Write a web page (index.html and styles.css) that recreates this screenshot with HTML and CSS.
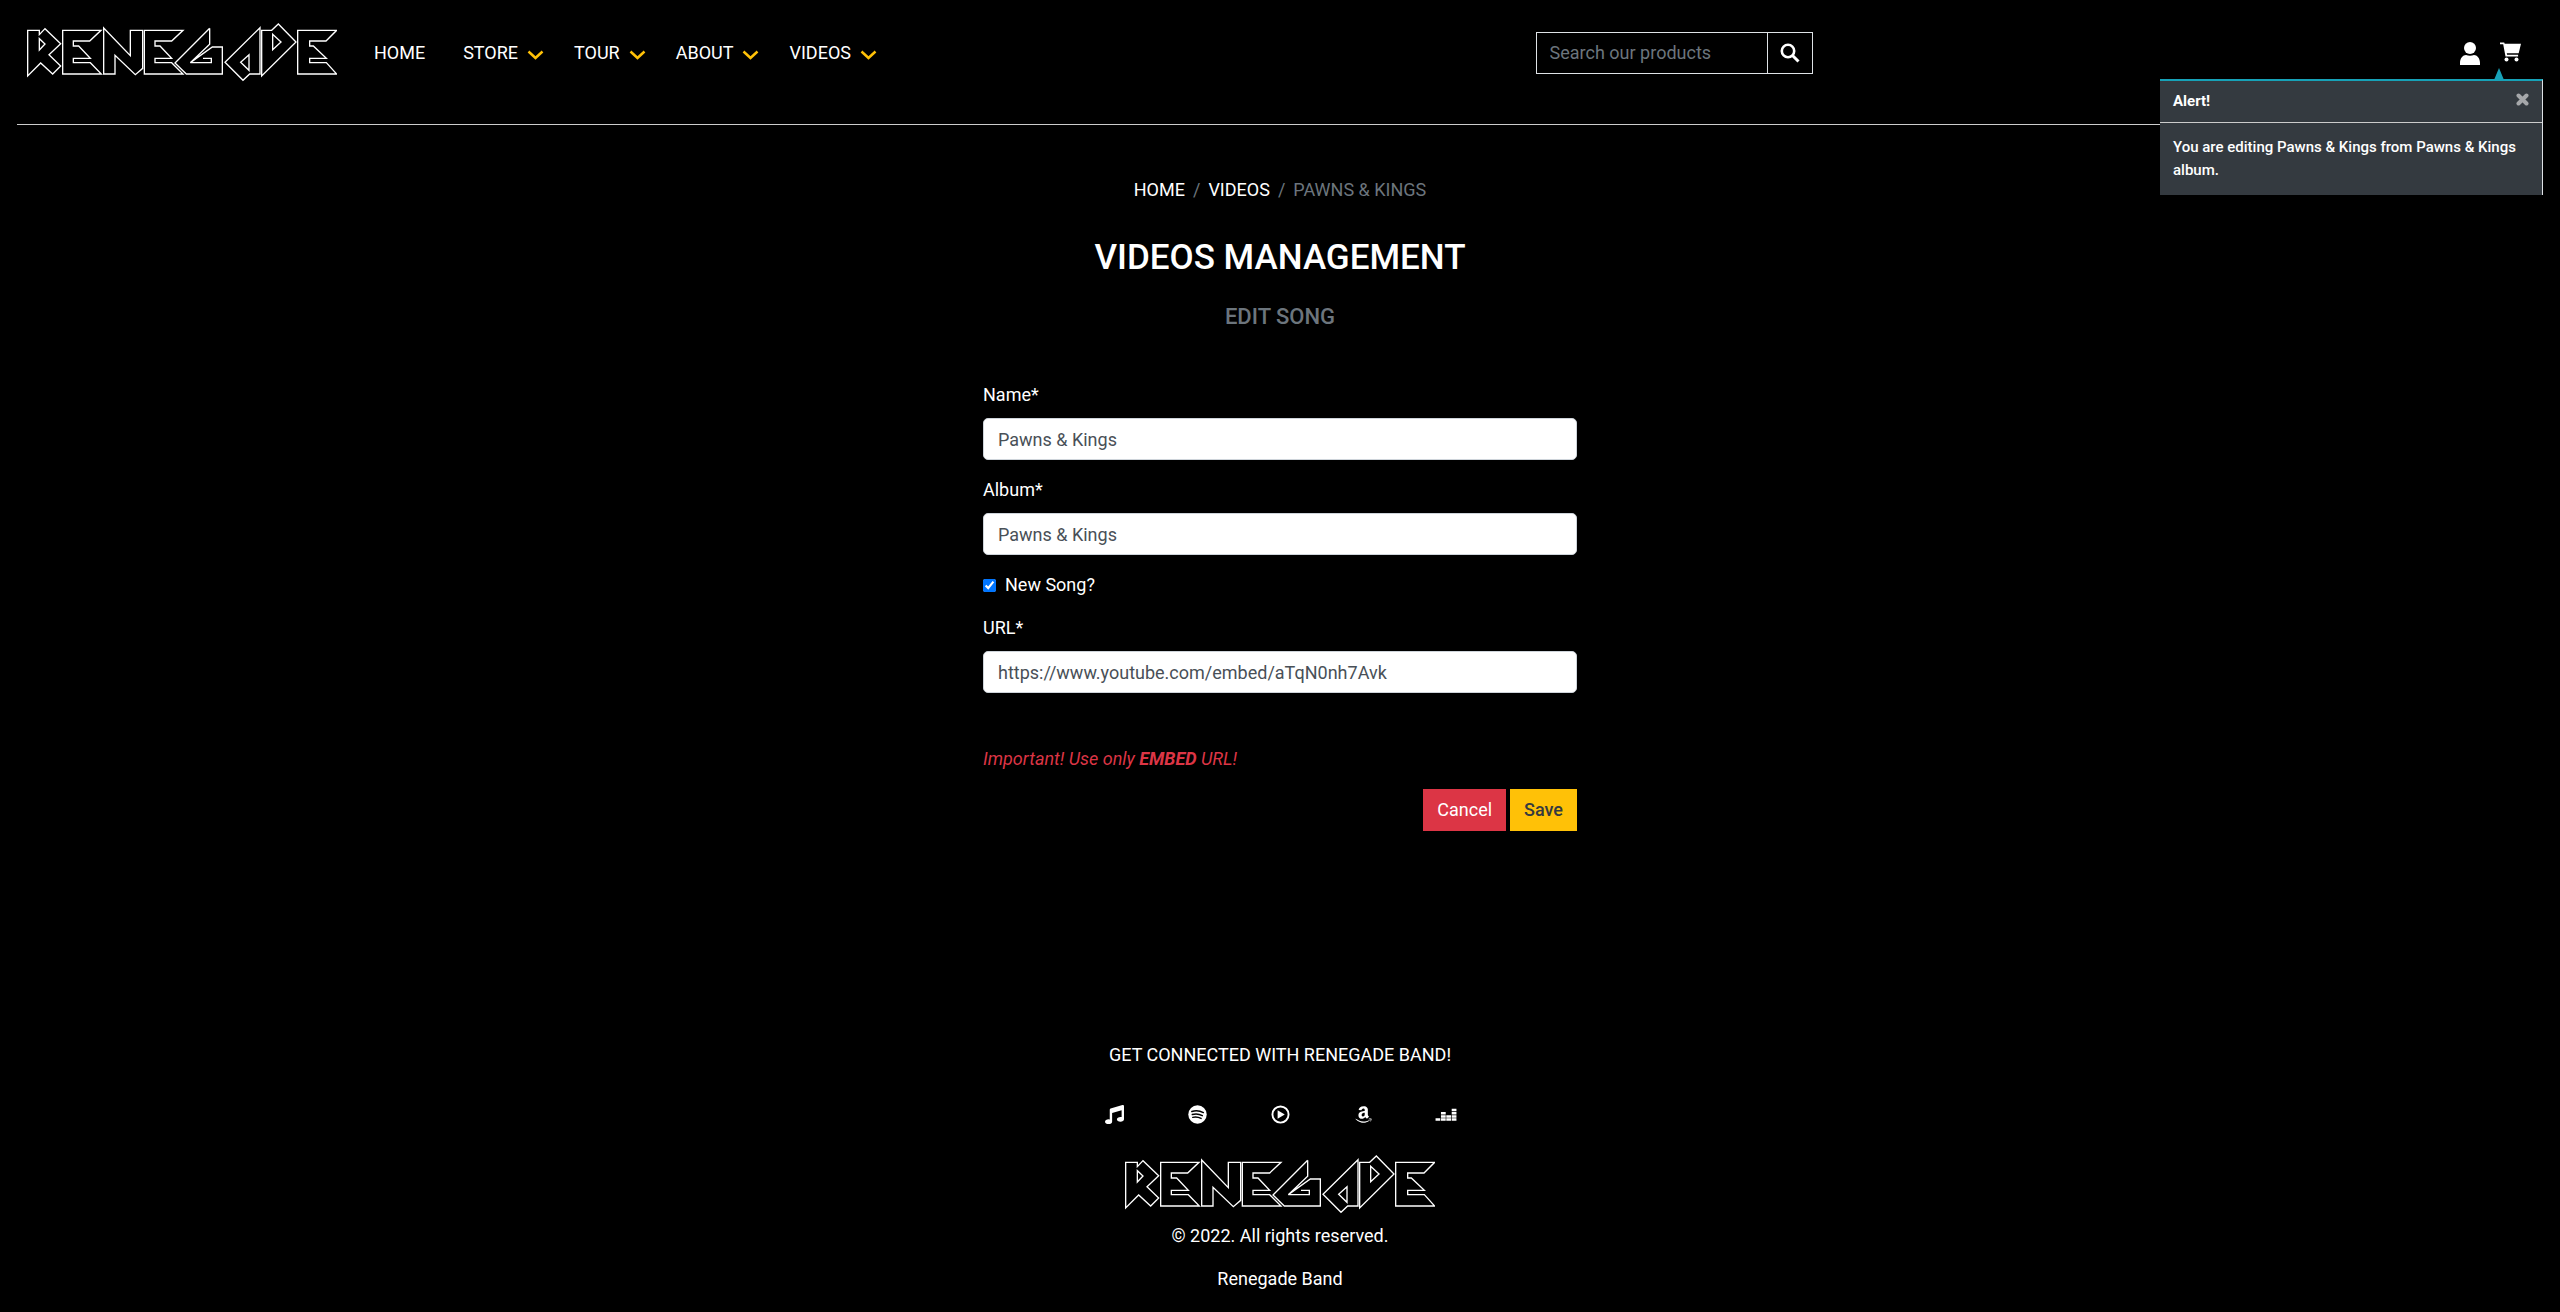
FILE: index.html
```html
<!DOCTYPE html>
<html lang="en">
<head>
<meta charset="utf-8">
<title>Renegade Band</title>
<link rel="stylesheet" href="styles.css">
</head>
<body>
<svg width="0" height="0" class="sprite" aria-hidden="true">
  <symbol id="chevron" viewBox="0 0 16 10"><path d="M1 1.500l7 6.500 7-6.500" fill="none" stroke="currentColor" stroke-width="2.500"/></symbol>
  <symbol id="logo" viewBox="0 0 930 175">
    <g fill="none" stroke="#fff" stroke-width="4" stroke-miterlimit="3">
      <path d="M2 21H37V34L54 16L101 61L66 94L101 128L77 152L41 119L2 158ZM37 46V80L54 62Z"/>
      <path d="M107 21H222L188 53H139V68H155L190 105H139V118H190L223 152H107Z"/>
      <path d="M230 14L310 97V21H347V135L325 154L264 96V152H230Z"/>
      <path d="M352 21H468L434 53H384V68H399L434 105H384V118H434L468 152H352Z"/>
      <path d="M548 15L444 119L478 152H586V71H556L490 118H553V105H528M548 15V63L490 118"/>
      <path d="M699 13L594 117L648 171L668 152H699ZM666 94V141L641 117Z"/>
      <path d="M704 21H734L754 2L807 56L704 158ZM737 33V79L762 56Z"/>
      <path d="M812 21H929L897 53H848V68H859L898 105H848V118H898L929 152H812Z"/>
    </g>
  </symbol>
</svg>
<header class="header">
  <a class="logo-link" href="#" aria-label="Renegade home"><svg class="logo"><use href="#logo"/></svg></a>
  <nav class="nav" aria-label="Main">
    <a href="#">HOME</a>
    <a href="#">STORE <svg class="chevron"><use href="#chevron"/></svg></a>
    <a href="#">TOUR <svg class="chevron"><use href="#chevron"/></svg></a>
    <a href="#">ABOUT <svg class="chevron"><use href="#chevron"/></svg></a>
    <a href="#">VIDEOS <svg class="chevron"><use href="#chevron"/></svg></a>
  </nav>
  <form class="search">
    <input type="search" placeholder="Search our products" aria-label="Search our products">
    <button type="button" aria-label="Search"><svg width="20" height="20" viewBox="0 0 20 20"><circle cx="8" cy="8" r="6.200" fill="none" stroke="#fff" stroke-width="2.600"/><path d="M12.500 12.500l6 6" stroke="#fff" stroke-width="3"/></svg></button>
  </form>
  <div class="account">
    <a href="#" aria-label="Account"><svg width="20" height="23" viewBox="0 0 20 23" fill="#fff"><circle cx="10" cy="6" r="6"/><path d="M0 23v-2c0-5 3-8 6-8 2.500 1 5.500 1 8 0 3 0 6 3 6 8v2z"/></svg></a>
    <a href="#" aria-label="Cart"><svg width="21" height="20" viewBox="0 0 21 20" fill="#fff"><path d="M0 .5h4.200l.5 1.300H21l-2.300 9.400H6.800l.3 1.600h11v1.700H5.500L3.200 2.300H0z"/><circle cx="6.500" cy="17.500" r="2"/><circle cx="16.500" cy="17.500" r="2"/></svg></a>
  </div>
  <div class="toast" role="alert">
    <div class="toast-head"><strong>Alert!</strong>
      <button type="button" aria-label="Close"><svg width="13" height="13" viewBox="0 0 13 13"><path d="M2.500 2.500l8 8m0-8l-8 8" stroke="#a5a7aa" stroke-width="4" stroke-linecap="round"/></svg></button></div>
    <p>You are editing Pawns &amp; Kings from Pawns &amp; Kings album.</p>
  </div>
</header>
<main class="main">
  <nav class="crumbs" aria-label="Breadcrumb"><a href="#">HOME</a><span>/</span><a href="#">VIDEOS</a><span>/</span><span>PAWNS &amp; KINGS</span></nav>
  <h1>VIDEOS MANAGEMENT</h1>
  <h2>EDIT SONG</h2>
  <form class="form">
    <div class="field"><label for="name">Name*</label><input id="name" type="text" value="Pawns &amp; Kings"></div>
    <div class="field"><label for="album">Album*</label><input id="album" type="text" value="Pawns &amp; Kings"></div>
    <div class="check"><input id="new" type="checkbox" checked><label for="new">New Song?</label></div>
    <div class="field"><label for="url">URL*</label><input id="url" type="text" value="https://www.youtube.com/embed/aTqN0nh7Avk"></div>
    <p class="note">Important! Use only <strong>EMBED</strong> URL!</p>
    <div class="actions"><button type="button" class="cancel">Cancel</button><button type="button" class="save">Save</button></div>
  </form>
</main>
<footer class="footer">
  <p>GET CONNECTED WITH RENEGADE BAND!</p>
  <div class="social">
    <a href="#" aria-label="Music"><svg viewBox="0 0 512 512"><path d="M511.990 32c0-21-20-37-41.600-30.500l-320 96A32 32 0 0 0 128 128v261a137 137 0 0 0-32-5c-53 0-96 28.700-96 64s43 64 96 64 96-28.700 96-64V215l256-75v185a138 138 0 0 0-32-5c-53 0-96 28.700-96 64s43 64 96 64 96-28.700 96-64z"/></svg></a>
    <a href="#" aria-label="Spotify"><svg viewBox="0 0 20 20"><circle cx="10" cy="10" r="9.700"/><path d="M4 6.800c4-1.200 8.500-.8 12.200 1.200M4.500 10c3.500-1 7.500-.5 10.600 1.200M5 13c3-.7 6-.3 8.800 1.200" fill="none" stroke="#000" stroke-width="1.500" stroke-linecap="round"/></svg></a>
    <a href="#" aria-label="YouTube Music"><svg viewBox="0 0 20 20"><circle cx="10" cy="10" r="8.500" fill="none" stroke="#fff" stroke-width="2"/><path d="M7 5.500l7.500 4.500L7 14.500z"/></svg></a>
    <a href="#" aria-label="Amazon"><svg viewBox="0 0 448 512"><path d="M257.200 162.700c-48.700 1.800-169.500 15.500-169.500 117.500 0 109.500 138.300 114 183.500 43.200 6.500 10.200 35.400 37.500 45.300 46.800l56.800-56S341 288.900 341 261.400V114.300C341 89 316.500 32 228.700 32 140.700 32 94 87 94 136.300l73.500 6.800c16.300-49.500 54.200-49.500 54.200-49.500 40.700-.1 35.500 29.800 35.500 69.100zm0 86.800c0 80-84.200 68-84.200 17.200 0-47.200 50.500-56.700 84.200-57.800v40.600zm136 163.500c-7.700 10-70 67-174.500 67S34.200 408.500 9.700 379c-6.800-7.700 1-11.300 5.500-8.300C88.500 415.200 203 488.500 387.700 401c7.500-3.700 13.300 2 5.500 12zm39.800 2.200c-6.500 15.800-16 26.800-21.200 31-5.500 4.500-9.500 2.700-6.500-3.800s19.300-46.500 12.700-55c-6.500-8.300-37-4.300-48-3.200-10.800 1-13 2-14-.3-2.300-5.700 21.700-15.500 37.500-17.500 15.700-1.800 41-.8 46 5.700 3.700 5.100 0 27.100-6.500 43.100z"/></svg></a>
    <a href="#" aria-label="Deezer"><svg class="wide" viewBox="0 0 22 20"><path d="M0 14h5v2.500H0zM5.700 14h5v2.500h-5zM11.300 14h5v2.500h-5zM17 14h5v2.500h-5zM5.700 10.700h5v2.600h-5zM11.300 10.700h5v2.600h-5zM17 10.700h5v2.600h-5zM5.700 7.400h5V10h-5zM17 7.400h5V10h-5zM17 4h5v2.700h-5z"/></svg></a>
  </div>
  <svg class="logo" role="img" aria-label="Renegade"><use href="#logo"/></svg>
  <p>© 2022. All rights reserved.</p>
  <a href="#">Renegade Band</a>
</footer>
</body>
</html>
```
FILE: styles.css
```css
* { box-sizing: border-box; }
body {
  margin: 0;
  min-height: 100vh;
  display: flex;
  flex-direction: column;
  background: #000;
  color: #fff;
  font: 400 18px/26px Roboto, sans-serif;
}
a { color: inherit; text-decoration: none; }
p, h1, h2 { margin: 0; }
button, input { font: inherit; }
svg { display: block; }
.sprite { position: absolute; }
.logo { width: 310px; height: 59px; }

.header {
  position: relative;
  display: grid;
  grid-template-columns: 60% 1fr auto;
  align-items: start;
  margin: 0 17px;
  height: 125px;
  border-bottom: 1px solid #ccc;
}
.logo-link { grid-area: 1 / 1; margin: 23px 0 0 10px; width: 310px; }
.nav { grid-area: 1 / 1; display: flex; gap: 30px; margin: 40px 0 0 357px; }
.nav a { display: flex; align-items: center; gap: 9px; }
.nav a:first-child { margin-right: 8px; }
.chevron { width: 17px; height: 10px; margin-top: 3px; color: #ffc107; }
.search { grid-column: 2; display: flex; width: 277px; height: 42px; margin: 32px 0 0 3px; border: 1px solid #dee2e6; }
.search input { flex: 1; min-width: 0; padding: 0 13px; border: 0; background: transparent; color: #fff; }
.search input::placeholder { color: #6c757d; opacity: 1; }
.search button { width: 45px; padding: 0 12px; border: 0; border-left: 1px solid #dee2e6; background: transparent; }
.account { display: flex; gap: 20px; margin: 42px 22px 0 0; }

.toast {
  position: absolute;
  top: 79px;
  right: 0;
  width: 383px;
  height: 116px;
  border-top: 2px solid #17a2b8;
  border-right: 1px solid #dee2e6;
  background: #343a40;
  font-size: 15px;
  line-height: 23px;
  font-weight: 500;
}
.toast::before {
  content: "";
  position: absolute;
  top: -13px;
  right: 38px;
  border: solid transparent;
  border-width: 0 5px 12px;
  border-bottom-color: #17a2b8;
}
.toast-head { display: flex; justify-content: space-between; padding: 9px 13px; height: 42px; border-bottom: 1px solid #ccc; }
.toast-head button { display: flex; padding: 3px 0; border: 0; background: none; }
.toast p { padding: 13px; }

.main { display: flex; flex-direction: column; align-items: center; padding-top: 52px; }
.crumbs { display: flex; gap: 8px; color: #6c757d; }
.crumbs a { color: #fff; }
h1 { margin-top: 33px; font-size: 35px; line-height: 43px; font-weight: 500; }
h2 { margin-top: 24px; font-size: 22px; line-height: 27px; font-weight: 500; color: #6c757d; }
.form { width: 594px; max-width: 100%; margin-top: 52px; }
.field label { display: block; margin-bottom: 10px; }
.field input { display: block; width: 100%; height: 42px; padding: 0 14px; border: 1px solid #ced4da; border-radius: 5px; background: #fff; color: #495057; }
.field { margin-bottom: 17px; }
.check { display: flex; align-items: center; gap: 9px; margin-bottom: 17px; }
.check input { width: 13px; height: 13px; margin: 0; }
.note { margin-top: 53px; color: #dc3545; font-style: italic; }
.actions { display: flex; justify-content: flex-end; gap: 4px; margin-top: 17px; }
.actions button { height: 42px; padding: 0 14px; border: 0; }
.cancel { background: #dc3545; color: #fff; }
.save { background: #ffc107; color: #343a40; font-weight: 500; }

.footer { display: flex; flex-direction: column; align-items: center; margin-top: auto; padding-bottom: 20px; }
.social { display: flex; gap: 64px; margin: 37px 0 31px; }
.social a { display: flex; justify-content: center; width: 19px; }
.social svg { flex: none; width: 19px; height: 19px; fill: #fff; }
.social .wide { width: 22px; }
.footer .logo + p { margin: 9px 0 17px; }
```
